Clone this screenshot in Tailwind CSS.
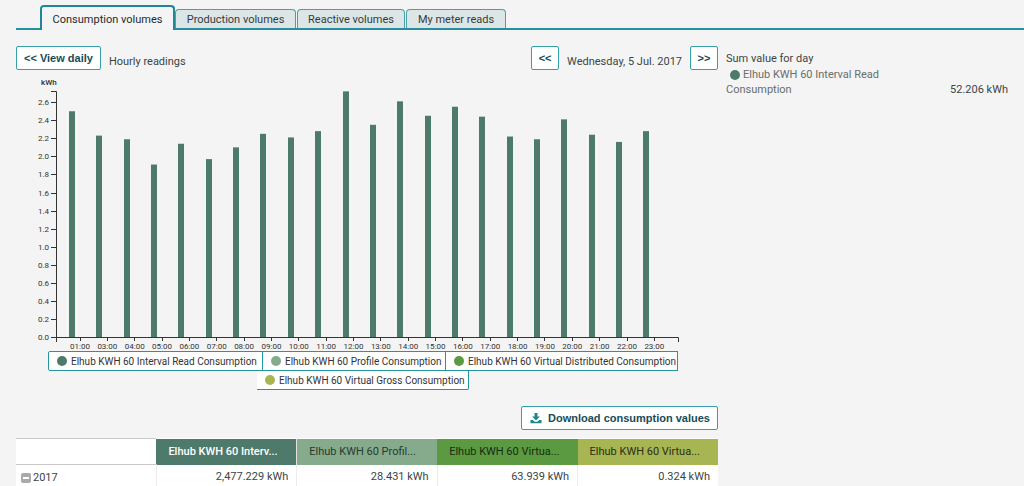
<!DOCTYPE html>
<html lang="en">
<head>
<meta charset="utf-8">
<title>Consumption volumes</title>
<script src="https://cdn.jsdelivr.net/npm/@tailwindcss/browser@4"></script>
</head>
<body class="min-h-screen overflow-x-hidden bg-[#f4f4f4] font-['Roboto','Liberation_Sans',sans-serif] text-[11px] text-[#3c4545]">
<nav class="ml-4 flex items-end border-b-2 border-[#278ea0] pt-[5px] pl-6 text-[#333b40]" aria-label="Volumes">
  <a href="#consumption" aria-current="page" class="-mb-0.5 flex h-[25px] w-[135px] items-center justify-center rounded-t-sm border-x-2 border-t-2 border-[#208796] bg-[#f4f4f4] pt-1 text-[#222b2f]">Consumption volumes</a>
  <a href="#production" class="flex h-[19px] w-[121px] items-center justify-center rounded-t-sm border border-b-0 border-[#48a1a8] bg-[#dde6e6] pt-0.5">Production volumes</a>
  <a href="#reactive" class="ml-px flex h-[19px] w-[108px] items-center justify-center rounded-t-sm border border-b-0 border-[#48a1a8] bg-[#dde6e6] pt-0.5">Reactive volumes</a>
  <a href="#reads" class="ml-px flex h-[19px] w-[100px] items-center justify-center rounded-t-sm border border-b-0 border-[#48a1a8] bg-[#dde6e6] pt-0.5">My meter reads</a>
</nav>
<main class="grid grid-cols-[702fr_282fr] gap-2 px-4 pt-4">
  <section>
    <div class="flex h-6 items-center">
      <button class="h-6 rounded-xs border border-[#36a0a8] bg-white px-[7px] font-['Liberation_Sans',sans-serif] font-bold text-[#174c56]">&lt;&lt; View daily</button>
      <span class="ml-2 pt-2">Hourly readings</span>
      <button aria-label="Previous day" class="ml-auto h-6 w-7 rounded-xs border border-[#36a0a8] bg-white font-['Liberation_Sans',sans-serif] font-bold text-[#174c56]">&lt;&lt;</button>
      <span class="mx-2 pt-2">Wednesday, 5 Jul. 2017</span>
      <button aria-label="Next day" class="h-6 w-7 rounded-xs border border-[#36a0a8] bg-white font-['Liberation_Sans',sans-serif] font-bold text-[#174c56]">&gt;&gt;</button>
    </div>
    <svg id="chart" viewBox="0 0 702 275" class="mt-1.5 block h-auto w-full overflow-visible" role="img" aria-label="Hourly consumption in kWh">
      <text x="25" y="9" class="fill-[#333] text-[8px] font-medium">kWh</text>
      <g id="bars" class="fill-[#4e7a6b]"></g>
      <path d="M35 15.500H40.500V266M35 261.500H662.500V266" class="fill-none stroke-[#333]"/>
      <path id="ticks" class="fill-none stroke-[#333]"/>
      <g id="ylabels" class="fill-[#333] text-[8px]" text-anchor="end"></g>
      <g id="xlabels" class="fill-[#333] text-[8px]" text-anchor="middle"></g>
    </svg>
    <div class="flex flex-wrap justify-center pr-2 text-[10px] text-[#333] [&_i]:size-2.5 [&_i]:rounded-full">
      <button class="flex h-5 w-[215px] items-center gap-1 rounded-l-xs border border-[#2595a0] bg-white pl-2 whitespace-nowrap"><i class="bg-[#4e7a6b]"></i>Elhub KWH 60 Interval Read Consumption</button>
      <button class="-ml-px flex h-5 w-[184px] items-center gap-1 border border-[#2595a0] bg-white pl-2 whitespace-nowrap"><i class="bg-[#86aa8c]"></i>Elhub KWH 60 Profile Consumption</button>
      <button class="-ml-px flex h-5 w-[233px] items-center gap-1 border border-[#2595a0] bg-white pl-2 whitespace-nowrap"><i class="bg-[#5b9a40]"></i>Elhub KWH 60 Virtual Distributed Consumption</button>
      <button class="-mt-px flex h-5 w-[212px] items-center gap-1 rounded-br-xs border border-l-0 border-[#2595a0] bg-white pl-2 whitespace-nowrap"><i class="bg-[#a7b553]"></i>Elhub KWH 60 Virtual Gross Consumption</button>
    </div>
    <div class="mt-4 flex justify-end">
      <button class="flex h-6 items-center gap-1.5 rounded-xs border border-[#36a0a8] bg-white pr-[7px] pl-2 font-['Liberation_Sans',sans-serif] font-bold text-[#174c56]">
        <svg viewBox="0 0 12 12" class="size-3 fill-[#21858f]" aria-hidden="true"><path d="M4.500 1h3v3.500H10L6 8.500 2 4.500h2.500zM.500 8h2.300L4.600 9.800h2.800L9.200 8h2.300v3.200H.500z"/></svg>
        Download consumption values</button>
    </div>
    <table class="mt-2 w-full table-fixed border-collapse bg-white">
      <thead>
        <tr class="h-[26px] text-left [&>th]:truncate [&>th]:px-3 [&>th]:pt-0.5 [&>th]:font-normal">
          <td class="border-y border-[#c8c8c8]"></td>
          <th scope="col" class="bg-[#4e7a6b] text-white"><span class="font-medium">Elhub KWH 60 Interv...</span></th>
          <th scope="col" class="border-l border-[#e2e2e2] bg-[#86aa8c] text-[#263b2c]">Elhub KWH 60 Profil...</th>
          <th scope="col" class="bg-[#5b9a40] text-[#182c12]">Elhub KWH 60 Virtua...</th>
          <th scope="col" class="bg-[#a7b553] text-[#2b3014]">Elhub KWH 60 Virtua...</th>
        </tr>
      </thead>
      <tbody>
        <tr class="h-[26px] text-right [&>td]:border-l [&>td]:border-[#ececec] [&>td]:pr-2">
          <th scope="row" class="pl-[5px] font-normal"><span class="flex items-center gap-0.5"><button aria-label="Collapse 2017" class="flex size-2.5 items-center justify-center rounded-xs bg-[#aaa]"><span class="h-0.5 w-1.5 bg-white"></span></button>2017</span></th>
          <td>2,477.229 kWh</td><td>28.431 kWh</td><td>63.939 kWh</td><td>0.324 kWh</td>
        </tr>
      </tbody>
    </table>
  </section>
  <aside class="pt-1">
    <h2 class="pt-px text-[11px] leading-4">Sum value for day</h2>
    <div class="flex items-end justify-between leading-[15px]">
      <p class="w-[170px] text-[#666e6e]"><span class="mr-[3px] ml-1 inline-block size-2.5 rounded-full bg-[#4e7a6b] align-middle"></span>Elhub KWH 60 Interval Read Consumption</p>
      <span>52.206 kWh</span>
    </div>
  </aside>
</main>
<script>
const NS = 'http://www.w3.org/2000/svg';
const BASE = 261, UNIT = 90.3, STEP = 27.35;
const values = [2.5, 2.23, 2.19, 1.91, 2.14, 1.97, 2.1, 2.25, 2.21, 2.28, 2.72, 2.35, 2.61, 2.45, 2.55, 2.44, 2.22, 2.19, 2.41, 2.24, 2.16, 2.28];
const add = (id, tag, attrs, text) => {
  const el = document.createElementNS(NS, tag);
  for (const k in attrs) el.setAttribute(k, attrs[k]);
  if (text) el.textContent = text;
  document.getElementById(id).append(el);
};
let ticks = '';
values.forEach((v, i) => {
  const hour = i ? i + 2 : 1, x = 64 + i * STEP;
  add('bars', 'rect', {x: Math.round(53 + i * STEP), y: BASE - v * UNIT, width: 6, height: v * UNIT});
  add('xlabels', 'text', {x, y: 273}, String(hour).padStart(2, '0') + ':00');
  ticks += `M${Math.floor(x) + 0.5} 261v4`;
});
for (let i = 0; i <= 13; i++) {
  const y = Math.round(BASE - i * 0.2 * UNIT);
  add('ylabels', 'text', {x: 33, y: y + 3}, (i / 5).toFixed(1));
  ticks += `M35 ${y + 0.5}h5`;
}
document.getElementById('ticks').setAttribute('d', ticks);
</script>
</body>
</html>
